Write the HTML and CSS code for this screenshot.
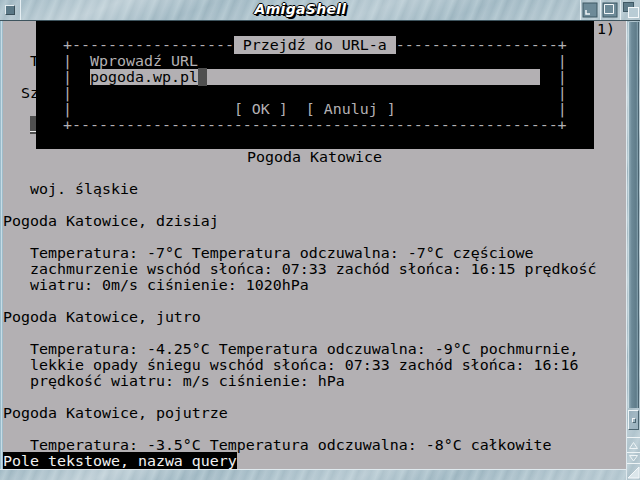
FILE: index.html
```html
<!DOCTYPE html>
<html lang="pl">
<head>
<meta charset="utf-8">
<title>AmigaShell</title>
<link rel="stylesheet" href="styles.css">
</head>
<body>
<div class="window">
  <div class="titlebar marble">
    <div class="close"><div class="close-box"></div></div>
    <div class="title">AmigaShell</div>
    <div class="gadget">
      <svg width="19" height="20" viewBox="0 0 19 20"><rect x="2" y="3" width="14" height="14" fill="#6d8a98" stroke="#3f5864"/><path d="M5 10 V14 H9" fill="none" stroke="#f2f6f8" stroke-width="1.5"/></svg>
    </div>
    <div class="gadget">
      <svg width="19" height="20" viewBox="0 0 19 20"><rect x="2" y="3" width="14" height="14" fill="#6d8a98" stroke="#3f5864"/><path d="M3.5 13.5 V4.5 H12.5 V13.5 Z" fill="none" stroke="#f2f6f8" stroke-width="1"/></svg>
    </div>
    <div class="gadget">
      <svg width="19" height="20" viewBox="0 0 19 20"><rect x="2.5" y="2.5" width="10" height="9" fill="#5f7c8a" stroke="#3f5864"/><rect x="7.5" y="7.5" width="10" height="10" fill="#b9ccd5" stroke="#f4f8fa"/></svg>
    </div>
  </div>
  <div class="main">
    <div class="left">
      <div class="inner">
        <div class="lborder"></div>
        <div class="content">
          <div class="line pageno">(p1 z 1)</div>
          <div class="line"></div>
          <div class="line">   Twoja lokalizacja</div>
          <div class="line"></div>
          <div class="line">  Szukaj miejscowości:</div>
          <div class="line"></div>
          <div class="line">   <span class="field">                    </span></div>
          <div class="line"></div>
          <div class="line center">Pogoda Katowice</div>
          <div class="line"></div>
          <div class="line">   woj. śląskie</div>
          <div class="line"></div>
          <div class="line">Pogoda Katowice, dzisiaj</div>
          <div class="line"></div>
          <div class="line">   Temperatura: -7°C Temperatura odczuwalna: -7°C częściowe</div>
          <div class="line">   zachmurzenie wschód słońca: 07:33 zachód słońca: 16:15 prędkość</div>
          <div class="line">   wiatru: 0m/s ciśnienie: 1020hPa</div>
          <div class="line"></div>
          <div class="line">Pogoda Katowice, jutro</div>
          <div class="line"></div>
          <div class="line">   Temperatura: -4.25°C Temperatura odczuwalna: -9°C pochmurnie,</div>
          <div class="line">   lekkie opady śniegu wschód słońca: 07:33 zachód słońca: 16:16</div>
          <div class="line">   prędkość wiatru: m/s ciśnienie: hPa</div>
          <div class="line"></div>
          <div class="line">Pogoda Katowice, pojutrze</div>
          <div class="line"></div>
          <div class="line">   Temperatura: -3.5°C Temperatura odczuwalna: -8°C całkowite</div>
          <div class="line"><span class="status">Pole tekstowe, nazwa query</span></div>

          <div class="dialog">
            <div class="drow">+------------------<span class="dtitle"> Przejdź do URL-a </span>------------------+</div>
            <div class="drow">|<span class="dmid">  Wprowadź URL</span>|</div>
            <div class="drow">|<span class="dmid">  <span class="input">pogoda.wp.pl<span class="cursor"> </span></span></span>|</div>
            <div class="drow">|<span class="dmid"></span>|</div>
            <div class="drow">|<span class="dmid buttons">[ OK ]  [ Anuluj ]</span>|</div>
            <div class="drow">+------------------------------------------------------+</div>
          </div>
        </div>
      </div>
      <div class="bborder marble"></div>
    </div>
    <div class="right marble">
      <div class="track">
        <div class="knob"></div>
        <div class="grip"><div class="grip-mark"></div></div>
      </div>
      <div class="arrow up">
        <svg width="13" height="14" viewBox="0 0 13 14"><path d="M2.5 10.5 L6.5 4.5 L10.5 10.5 Z" fill="none" stroke="#eef4f6"/></svg>
      </div>
      <div class="arrow down">
        <svg width="13" height="10" viewBox="0 0 13 10"><path d="M2.5 2.5 L6.5 8 L10.5 2.5 Z" fill="none" stroke="#eef4f6"/></svg>
      </div>
      <div class="size">
        <svg width="13" height="16" viewBox="0 0 13 16"><path d="M12 3 L12 14 L1 14 Z" fill="#dbe6eb" stroke="#f4f8fa"/></svg>
      </div>
    </div>
  </div>
</div>
</body>
</html>
```
FILE: styles.css
```css
* { box-sizing: border-box; }
html, body { margin: 0; padding: 0; }
body {
  width: 640px;
  height: 480px;
  overflow: hidden;
  background: #a8bfca;
}
.window {
  display: flex;
  flex-direction: column;
  width: 640px;
  height: 480px;
}
.marble {
  background:
    linear-gradient(160deg, rgba(255,255,255,0) 0%, rgba(255,255,255,.30) 18%, rgba(255,255,255,0) 32%, rgba(255,255,255,.22) 58%, rgba(255,255,255,0) 72%, rgba(255,255,255,.18) 90%),
    repeating-linear-gradient(112deg, #a0b8c3 0px, #b2c7d0 6px, #9db5c0 11px, #adc2cc 17px, #a0b8c3 23px),
    #a8bfca;
}
.titlebar {
  height: 21px;
  display: flex;
  border-bottom: 1px solid #3e545e;
}
.close {
  width: 21px;
  display: flex;
  align-items: center;
  justify-content: center;
  border-right: 1px solid #e6eff3;
}
.close-box {
  width: 10px;
  height: 10px;
  background: #5a7886;
  border: 1px solid;
  border-color: #e4edf1 #3a505a #3a505a #e4edf1;
}
.title {
  flex: 1;
  text-align: center;
  font-family: "DejaVu Sans", sans-serif;
  font-style: italic;
  font-weight: bold;
  font-size: 14px;
  line-height: 19px;
  color: #ffffff;
  letter-spacing: 0.3px;
  text-shadow: -1px 0 #000, 1px 0 #000, 0 -1px #000, 0 1px #000, 1px 1px #000, 2px 2px #000;
}
.gadget {
  width: 20px;
  border-left: 1px solid #e6eff3;
  display: flex;
  align-items: flex-start;
}
.main {
  flex: 1;
  display: flex;
}
.left {
  width: 626px;
  display: flex;
  flex-direction: column;
}
.inner {
  height: 448px;
  display: flex;
}
.lborder {
  width: 3px;
  background: linear-gradient(to right, #86abbd, #c6dce6, #8aacbc);
}
.content {
  width: 623px;
  height: 448px;
  position: relative;
  overflow: hidden;
  background: #b3b0b3;
  color: #000;
  font-family: "DejaVu Sans Mono", monospace;
  font-size: 14.95px;
  line-height: 16px;
}
.line { height: 16px; white-space: pre; }
.pageno { text-align: right; padding-right: 11px; }
.center { text-align: center; }
.field {
  background: #4f4f4f;
  box-shadow: inset 0 -2px 0 #4f4f4f, inset 0 -3px 0 #f0f0f0;
}
.status {
  background: #000;
  color: #f2f2f2;
}
.bborder {
  height: 11px;
  border-top: 1px solid #dfe9ee;
}
.right {
  width: 14px;
  display: flex;
  flex-direction: column;
  border-left: 1px solid #dfe9ee;
}
.track {
  flex: 1;
  display: flex;
  flex-direction: column;
  padding: 1px 1px 0 1px;
}
.knob {
  height: 386px;
  background: linear-gradient(to right, #8eaab7, #6c8997 30%, #5f7c8a 80%, #8aa6b3);
  border-left: 1px solid #c8d9e0;
  border-right: 1px solid #4a6370;
}
.grip {
  height: 20px;
  margin-top: 2px;
  border: 1px solid;
  border-color: #eef4f6 #4c6571 #4c6571 #eef4f6;
  display: flex;
  align-items: center;
  justify-content: center;
  background: rgba(120,150,165,.35);
}
.grip-mark {
  width: 4px;
  height: 5px;
  border: 1px solid;
  border-color: #f2f6f8 #4c6571 #4c6571 #f2f6f8;
}
.arrow {
  display: flex;
  align-items: center;
  justify-content: center;
  border-top: 1px solid #eef4f6;
}
.arrow.up { height: 15px; }
.arrow.down { height: 11px; }
.size {
  height: 17px;
  border-top: 1px solid #eef4f6;
  display: flex;
  align-items: flex-end;
}
.dialog {
  position: absolute;
  left: 33px;
  top: 0;
  width: 558px;
  height: 128px;
  background: #000;
  color: #b3b0b3;
  padding: 16px 0 0 27px;
}
.drow { height: 16px; white-space: pre; }
.dtitle { background: #b3b0b3; color: #000; }
.dmid { display: inline-block; width: 54ch; vertical-align: top; }
.input {
  display: inline-block;
  width: 50ch;
  background: #b3b0b3;
  color: #000;
  vertical-align: top;
}
.cursor { background: #4f4f4f; }
.buttons { padding-left: 18ch; }
```
